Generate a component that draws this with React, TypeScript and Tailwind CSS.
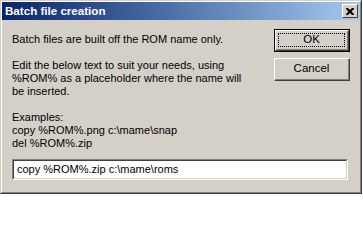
import React from "react";

export default function App() {
  const font = { fontFamily: '"Liberation Sans", Arial, sans-serif' };
  return (
    <div className="w-[363px] h-[240px] bg-white" style={font}>
      <div className="w-[362px] h-[194px] border-r border-b border-[#404040] bg-[#D4D0C8]">
        <div className="h-full border-t border-l border-[#D4D0C8]">
          <div className="h-full border-t border-l border-r border-b border-t-white border-l-white border-r-[#808080] border-b-[#808080] flex flex-col">
            <div className="h-[18px] mx-0 flex items-center justify-between bg-gradient-to-r from-[#0A246A] to-[#A6CAF0] pl-[3px] pr-[2px]">
              <span className="text-white font-bold text-[11.6px] leading-none">Batch file creation</span>
              <div className="w-[16px] h-[14px] bg-[#D4D0C8] border-t border-l border-white border-r border-b border-r-[#404040] border-b-[#404040] flex items-center justify-center">
                <svg width="8" height="7" viewBox="0 0 8 7">
                  <path d="M0 0h2l2 2 2-2h2v1l-2.5 2.5L8 6v1H6L4 5 2 7H0V6l2.5-2.5L0 1z" fill="#000" />
                </svg>
              </div>
            </div>
            <div className="flex flex-1 pl-[10px] pr-[10px] pt-[13px]">
              <div className="flex-1 flex flex-col">
                <div className="text-[11px] leading-[13px] text-black">
                  <p>Batch files are built off the ROM name only.</p>
                  <p className="h-[13px]"></p>
                  <p>Edit the below text to suit your needs, using</p>
                  <p>%ROM% as a placeholder where the name will</p>
                  <p>be inserted.</p>
                  <p className="h-[13px]"></p>
                  <p>Examples:</p>
                  <p>copy %ROM%.png c:\mame\snap</p>
                  <p>del %ROM%.zip</p>
                </div>
              </div>
              <div className="flex flex-col gap-[6px] -mt-[4px]">
                <div className="w-[76px] h-[23px] border border-black">
                  <div className="w-full h-full border-t border-l border-white border-r border-b border-r-[#404040] border-b-[#404040]">
                    <div className="w-full h-full border-r border-b border-r-[#808080] border-b-[#808080] flex items-center justify-center p-[2px]">
                      <div className="w-full h-full border border-dotted border-black flex items-center justify-center text-[11.5px] text-black">OK</div>
                    </div>
                  </div>
                </div>
                <div className="w-[76px] h-[23px] border-t border-l border-white border-r border-b border-r-[#404040] border-b-[#404040]">
                  <div className="w-full h-full border-r border-b border-r-[#808080] border-b-[#808080] flex items-center justify-center text-[11.5px] text-black">Cancel</div>
                </div>
              </div>
            </div>
            <div className="px-[10px] pb-[12px]">
              <div className="w-[336px] h-[21px] border-t border-l border-r border-b border-t-[#808080] border-l-[#808080] border-r-white border-b-white">
                <div className="w-full h-full border-t border-l border-r border-b border-t-[#404040] border-l-[#404040] border-r-[#D4D0C8] border-b-[#D4D0C8] bg-white flex items-center pl-[3px] text-[11px] text-black">
                  copy %ROM%.zip c:\mame\roms
                </div>
              </div>
            </div>
          </div>
        </div>
      </div>
    </div>
  );
}
